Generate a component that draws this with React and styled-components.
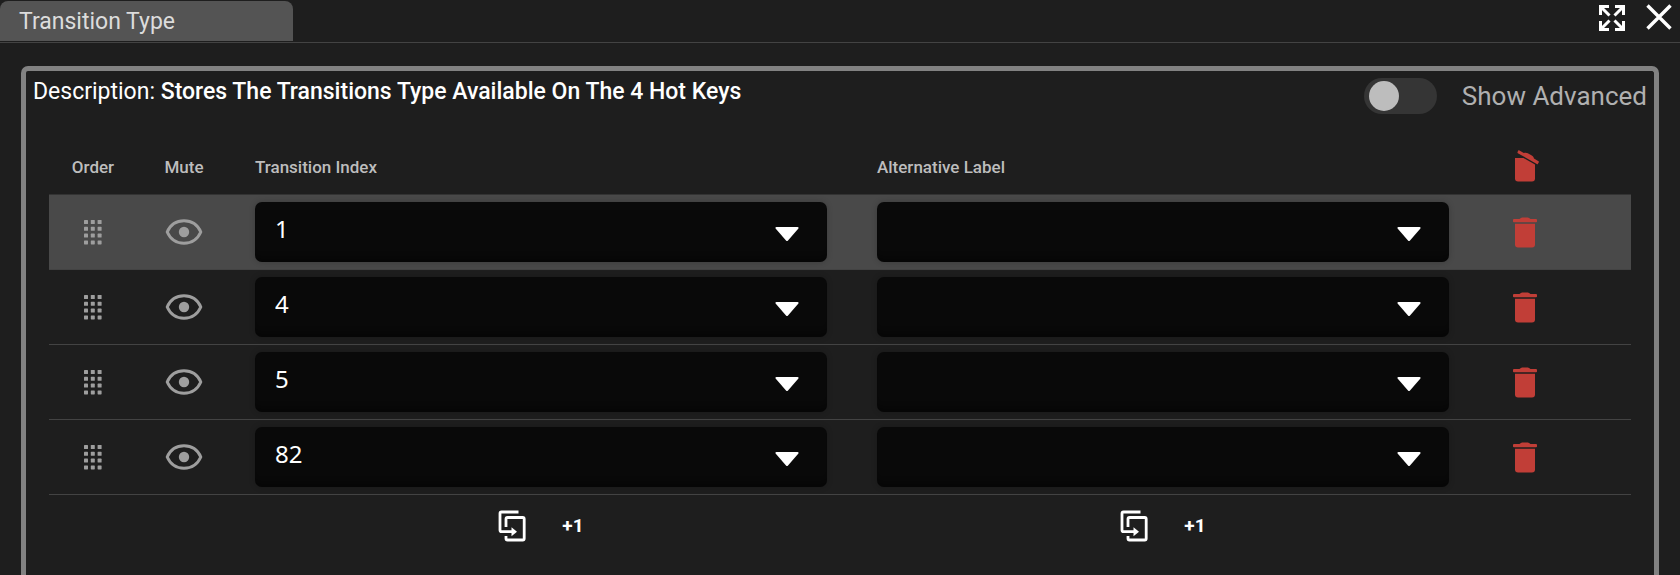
import React, { useState } from 'react'
import styled, { createGlobalStyle } from 'styled-components'

const colors = {
    background: '#1e1e1e',
    tab: '#545454',
    line: '#434343',
    frame: '#828282',
    field: '#090909',
    activeRow: '#494949',
    muted: '#9e9e9e',
    label: '#bdbdbd',
    danger: '#c13e37',
};

const GlobalStyle = createGlobalStyle`
    * {
        box-sizing: border-box;
    }
    body {
        margin: 0;
        background: ${colors.background};
        color: #fff;
        font-family: Roboto, "Noto Sans", sans-serif;
        font-size: 23px;
    }
`;

const Window = styled.div`
    display: flex;
    flex-direction: column;
    height: 100vh;
    overflow: hidden;
`;

const TitleBar = styled.header`
    display: flex;
    justify-content: space-between;
    height: 43px;
    padding-top: 1px;
    border-bottom: 1px solid ${colors.line};
    flex-shrink: 0;
`;

const Tab = styled.h1`
    width: 293px;
    height: 40px;
    margin: 0;
    padding-left: 19px;
    border-radius: 8px 8px 0 0;
    background: ${colors.tab};
    color: #dcdcdc;
    font-size: 23px;
    line-height: 42px;
    font-weight: 400;
`;

const WindowActions = styled.div`
    display: flex;
    align-items: flex-start;
    gap: 20px;
    padding: 3px 8px 0 0;
`;

const IconButton = styled.button`
    display: inline-flex;
    align-items: center;
    justify-content: center;
    padding: 0;
    border: 0;
    background: none;
    color: ${props => props.$color || '#fff'};
    cursor: pointer;
`;

const Panel = styled.section`
    flex: 1;
    margin: 23px 21px 0;
    border: 5px solid ${colors.frame};
    border-bottom: 0;
    border-radius: 7px 7px 0 0;
`;

const PanelHeader = styled.div`
    display: flex;
    justify-content: space-between;
    align-items: flex-start;
    height: 69px;
    padding: 7px 7px 0;
`;

const Description = styled.p`
    margin: 0;
    font-size: 23px;
    line-height: 28px;

    strong {
        font-weight: 500;
    }
`;

const SwitchLabel = styled.label`
    display: flex;
    align-items: center;
    gap: 25px;
    color: #b0b0b0;
    font-size: 26px;
    line-height: 36px;
`;

const Switch = styled.input`
    appearance: none;
    display: flex;
    align-items: center;
    width: 73px;
    height: 36px;
    margin: 0;
    padding: 0 5px;
    border-radius: 18px;
    background: #353535;
    cursor: pointer;

    &::before {
        content: '';
        width: 30px;
        height: 30px;
        border-radius: 50%;
        background: ${colors.label};
    }
    &:checked {
        justify-content: flex-end;
    }
`;

const TableWrapper = styled.div`
    padding: 0 23px;
`;

const Table = styled.table`
    width: 100%;
    table-layout: fixed;
    border-collapse: separate;
    border-spacing: 0;
`;

const Col = styled.col`
    width: ${props => props.$width || 'auto'};
`;

const HeadCell = styled.th`
    height: 55px;
    padding: ${props => props.$padding || '0'};
    border-bottom: 1px solid #333;
    color: ${colors.label};
    font-size: 17px;
    font-weight: 500;
    line-height: 24px;
    text-align: ${props => props.$align || 'left'};
`;

const Row = styled.tr`
    background: ${props => props.$active ? colors.activeRow : 'transparent'};
`;

const Cell = styled.td`
    height: 75px;
    padding: ${props => props.$padding || '0'};
    border-bottom: 1px solid ${colors.line};
    text-align: ${props => props.$align || 'left'};
    vertical-align: middle;
    line-height: 0;
`;

const Field = styled.div`
    display: grid;
    align-items: center;
`;

const Select = styled.select`
    grid-area: 1 / 1;
    appearance: none;
    width: 100%;
    height: 60px;
    padding: 0 60px 8px 20px;
    border: 0;
    border-radius: 7px;
    background: ${colors.field};
    box-shadow: 0 0 6px rgba(0, 0, 0, 0.2), inset 0 -10px 4px -4px rgba(0, 0, 0, 0.25);
    color: #fff;
    font-family: "Noto Sans", sans-serif;
    font-size: 24px;
`;

const FieldArrow = styled.svg`
    grid-area: 1 / 1;
    justify-self: end;
    width: 24px;
    height: 16px;
    margin-right: 28px;
    margin-top: 4px;
    pointer-events: none;
`;

const FootCell = styled.td`
    padding: ${props => props.$padding || '0'};
`;

const FootActions = styled.div`
    display: flex;
    align-items: center;
    justify-content: center;
    gap: 36px;
    height: 62px;
`;

const AddButton = styled(IconButton)`
    font-family: Roboto, sans-serif;
    font-size: 19px;
    font-weight: 700;
    line-height: 24px;
`;

const ExpandIcon = () => (
    <svg width="28" height="28" viewBox="0 0 28 28" fill="none" stroke="currentColor" strokeWidth="3">
        <path d="M11 2.5H2.5V11M17 2.5h8.5V11M11 25.5H2.5V17M17 25.5h8.5V17" />
        <path d="M3 3l8.500 8.500M25 3l-8.500 8.500M3 25l8.500-8.500M25 25l-8.500-8.500" />
    </svg>
);

const CloseIcon = () => (
    <svg width="26" height="26" viewBox="0 0 26 26" stroke="currentColor" strokeWidth="3.4">
        <path d="M1.500 1.500l23 23M24.500 1.500l-23 23" />
    </svg>
);

const DragIcon = () => (
    <svg width="18" height="25" viewBox="0 0 18 25" fill="currentColor">
        {[0, 1, 2, 3].map((y) => [0, 1, 2].map((x) => (
            <rect key={`${x}-${y}`} x={x * 6.8} y={y * 6.8} width="4" height="4" rx="0.600" />
        )))}
    </svg>
);

const EyeIcon = () => (
    <svg width="38" height="28" viewBox="0 0 38 28">
        <path
            d="M2.200 14C5.500 6.500 12 2.800 19 2.800S32.500 6.500 35.800 14C32.500 21.500 26 25.200 19 25.200S5.500 21.500 2.200 14z"
            fill="none"
            stroke="currentColor"
            strokeWidth="3"
            strokeLinejoin="round"
        />
        <circle cx="19" cy="14" r="5.200" fill="currentColor" />
    </svg>
);

const TrashIcon = () => (
    <svg width="24" height="31" viewBox="0 0 24 31" fill="currentColor">
        <path d="M2 6.800h20V27.500a3 3 0 0 1-3 3H5a3 3 0 0 1-3-3z" />
        <path d="M1 2h5.500C8 .8 9 .5 10 .5h4c1 0 2 .3 3.500 1.500H23q1 0 1 1v1.500q0 .8-1 .8H1q-1 0-1-.8V3q0-1 1-1z" />
    </svg>
);

const TrashOpenIcon = () => (
    <svg width="26" height="36" viewBox="0 -4 26 36" fill="currentColor">
        <path d="M2 8h8.500L22 14.500V28.500a3 3 0 0 1-3 3H5a3 3 0 0 1-3-3z" />
        <path d="M6 .2l4.800 2.700c2-.5 3-.2 4 .3l4 2.400c1 .6 1.600 1.200 2.200 2.900l4.500 2.700q.7.500.2 1.200l-.9 1.500q-.3.500-1 .1L4.800 3.200q-.6-.4-.3-.9l.7-1.700q.3-.6.8-.4z" />
    </svg>
);

const DuplicateIcon = () => (
    <svg width="28" height="32" viewBox="0 0 28 32" fill="none" stroke="currentColor" strokeWidth="2.8" strokeLinejoin="round">
        <path d="M20.500 2H3.500Q2 2 2 3.500V20q0 1.700 1.500 1.700H14" />
        <path d="M8 17V9q0-1.500 1.500-1.500h15.200q1.500 0 1.500 1.500v19.500q0 1.500-1.500 1.500H9.500Q8 30 8 28.500V26" />
        <path d="M13.500 17.200l5.500 4.500-5.500 4.500z" fill="currentColor" stroke="none" />
    </svg>
);

const columnPadding = '0 26px 0 24px';
const trashPadding = '0 0 0 38px';

const initialRows = [
    { id: 1, index: '1', active: true },
    { id: 2, index: '4' },
    { id: 3, index: '5' },
    { id: 4, index: '82' },
];

const SelectField = ({ label, value }) => (
    <Field>
        <Select aria-label={label} defaultValue={value}>
            <option value={value}>{value}</option>
        </Select>
        <FieldArrow viewBox="0 0 24 16">
            <path d="M1.500 1h21q1.700.2.700 1.700L13 14.500q-1 1-2 0L.8 2.700Q-.2 1.200 1.500 1z" fill="#fff" />
        </FieldArrow>
    </Field>
);

const ColumnActions = () => (
    <FootActions>
        <IconButton aria-label="Duplicate"><DuplicateIcon /></IconButton>
        <AddButton>+1</AddButton>
    </FootActions>
);

const App = () => {
    const [rows, setRows] = useState(initialRows);
    const removeRow = (id) => setRows(rows.filter((row) => row.id !== id));

    return (
        <Window>
            <GlobalStyle />
            <TitleBar>
                <Tab>Transition Type</Tab>
                <WindowActions>
                    <IconButton aria-label="Expand"><ExpandIcon /></IconButton>
                    <IconButton aria-label="Close"><CloseIcon /></IconButton>
                </WindowActions>
            </TitleBar>
            <Panel>
                <PanelHeader>
                    <Description>
                        Description: <strong>Stores The Transitions Type Available On The 4 Hot Keys</strong>
                    </Description>
                    <SwitchLabel>
                        <Switch type="checkbox" role="switch" />
                        Show Advanced
                    </SwitchLabel>
                </PanelHeader>
                <TableWrapper>
                    <Table>
                        <colgroup>
                            <Col $width="88px" />
                            <Col $width="94px" />
                            <Col />
                            <Col />
                            <Col $width="156px" />
                        </colgroup>
                        <thead>
                            <tr>
                                <HeadCell $align="center">Order</HeadCell>
                                <HeadCell $align="center">Mute</HeadCell>
                                <HeadCell $padding={columnPadding}>Transition Index</HeadCell>
                                <HeadCell $padding={columnPadding}>Alternative Label</HeadCell>
                                <HeadCell $padding={trashPadding}>
                                    <IconButton $color={colors.danger} aria-label="Delete all" onClick={() => setRows([])}>
                                        <TrashOpenIcon />
                                    </IconButton>
                                </HeadCell>
                            </tr>
                        </thead>
                        <tbody>
                            {rows.map((row) => (
                                <Row key={row.id} $active={row.active}>
                                    <Cell $align="center">
                                        <IconButton $color={colors.muted} aria-label="Reorder"><DragIcon /></IconButton>
                                    </Cell>
                                    <Cell $align="center">
                                        <IconButton $color={colors.muted} aria-label="Mute"><EyeIcon /></IconButton>
                                    </Cell>
                                    <Cell $padding={columnPadding}>
                                        <SelectField label="Transition Index" value={row.index} />
                                    </Cell>
                                    <Cell $padding={columnPadding}>
                                        <SelectField label="Alternative Label" value="" />
                                    </Cell>
                                    <Cell $padding={trashPadding}>
                                        <IconButton $color={colors.danger} aria-label="Delete" onClick={() => removeRow(row.id)}>
                                            <TrashIcon />
                                        </IconButton>
                                    </Cell>
                                </Row>
                            ))}
                        </tbody>
                        <tfoot>
                            <tr>
                                <FootCell colSpan={2} />
                                <FootCell $padding={columnPadding}><ColumnActions /></FootCell>
                                <FootCell $padding={columnPadding}><ColumnActions /></FootCell>
                                <FootCell />
                            </tr>
                        </tfoot>
                    </Table>
                </TableWrapper>
            </Panel>
        </Window>
    );
};

export default App;
